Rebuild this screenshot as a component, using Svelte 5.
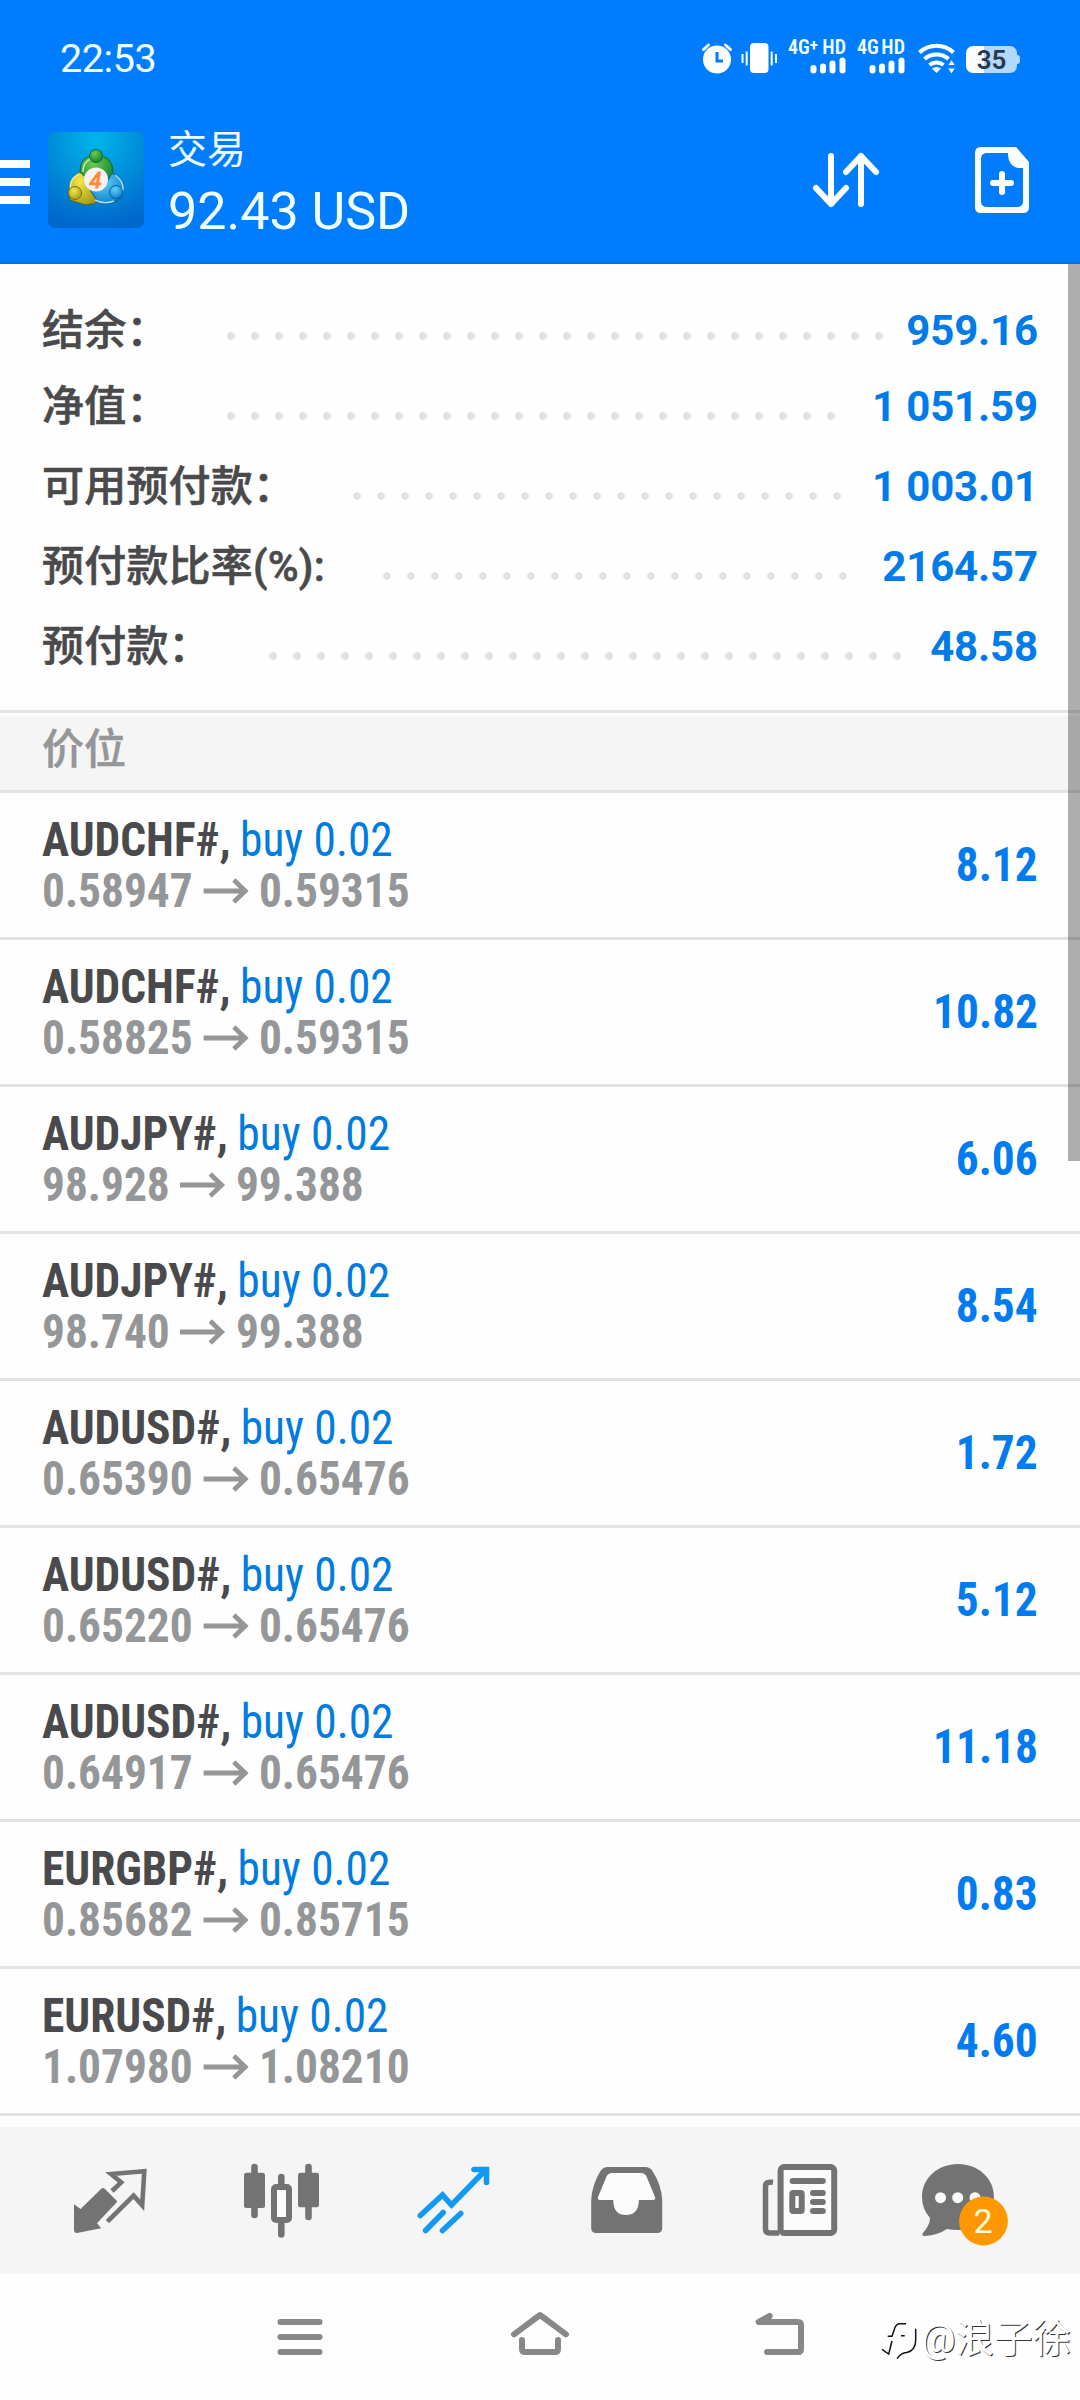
<script lang="ts">
	const summary = [
		{ label: '结余：', value: '959.16', dots: 28, tight: true },
		{ label: '净值：', value: '1 051.59', dots: 26, tight: false },
		{ label: '可用预付款：', value: '1 003.01', dots: 21, tight: false },
		{ label: '预付款比率(%):', value: '2164.57', dots: 20, tight: false },
		{ label: '预付款：', value: '48.58', dots: 27, tight: false }
	];

	const positions = [
		{ symbol: 'AUDCHF#', open: '0.58947', current: '0.59315', profit: '8.12' },
		{ symbol: 'AUDCHF#', open: '0.58825', current: '0.59315', profit: '10.82' },
		{ symbol: 'AUDJPY#', open: '98.928', current: '99.388', profit: '6.06' },
		{ symbol: 'AUDJPY#', open: '98.740', current: '99.388', profit: '8.54' },
		{ symbol: 'AUDUSD#', open: '0.65390', current: '0.65476', profit: '1.72' },
		{ symbol: 'AUDUSD#', open: '0.65220', current: '0.65476', profit: '5.12' },
		{ symbol: 'AUDUSD#', open: '0.64917', current: '0.65476', profit: '11.18' },
		{ symbol: 'EURGBP#', open: '0.85682', current: '0.85715', profit: '0.83' },
		{ symbol: 'EURUSD#', open: '1.07980', current: '1.08210', profit: '4.60' }
	];

	const carriers = [
		{ network: '4G', plus: true },
		{ network: '4G', plus: false }
	];
</script>

<div class="screen">
	<header class="header">
		<div class="status">
			<span class="time">22:53</span>
			<div class="status-icons">
				<svg class="alarm" width="32" height="32" viewBox="0 0 32 32">
					<circle cx="16" cy="17.5" r="14" fill="#fff" />
					<path d="M2.5 7.5 7.5 3M29.5 7.5l-5-4.5" stroke="#fff" stroke-width="3" stroke-linecap="round" />
					<path d="M16 10v9h6" fill="none" stroke="#007dff" stroke-width="3" />
				</svg>
				<svg class="vibrate" width="36" height="32" viewBox="0 0 36 32">
					<rect x="9" y="1" width="18.5" height="30" rx="4" fill="#fff" />
					<path d="M1.5 12v9M5.7 9.5v14M30.7 9.5v14M35 12v9" stroke="#fff" stroke-width="2" />
				</svg>
				{#each carriers as carrier}
					<div class="carrier" class:wide={carrier.plus}>
						<div class="network">
							<span>{carrier.network}{#if carrier.plus}<sup>+</sup>{/if}</span>
							<span>HD</span>
						</div>
						<svg width="36" height="17" viewBox="0 0 36 17">
							<path d="M3.5 11v2.5M13 9.5v4M22.5 6.5v7M32.5 3.5v10" stroke="#fff" stroke-width="6" stroke-linecap="round" />
						</svg>
					</div>
				{/each}
				<svg class="wifi" width="37" height="32" viewBox="0 0 37 32">
					<g fill="none" stroke="#fff" stroke-width="4">
						<path d="M1.5 10.5a25 25 0 0 1 34 0" />
						<path d="M6.5 17a18 18 0 0 1 24 0" />
						<path d="M11.5 23a11 11 0 0 1 14 0" />
					</g>
					<path d="m18.5 31-4.5-4.5q4.5-3 9 0z" fill="#fff" />
					<path d="m29.5 23.5 4-6 4 6zM29.5 26l4 6 4-6z" fill="#fff" stroke="#007dff" />
				</svg>
				<span class="battery">35</span>
			</div>
		</div>

		<div class="toolbar">
			<div class="burger"><i></i><i></i><i></i></div>
			<svg class="logo" width="96" height="96" viewBox="0 0 96 96">
				<defs>
					<radialGradient id="tile" cx=".5" cy=".08" r=".9">
						<stop offset="0" stop-color="#00b6ec" />
						<stop offset=".55" stop-color="#008bd8" />
						<stop offset="1" stop-color="#0068cc" />
					</radialGradient>
					<radialGradient id="green" cx=".4" cy=".3" r=".8">
						<stop offset="0" stop-color="#6cc94b" />
						<stop offset="1" stop-color="#087d32" />
					</radialGradient>
					<radialGradient id="yellow" cx=".4" cy=".3" r=".8">
						<stop offset="0" stop-color="#f5e74b" />
						<stop offset="1" stop-color="#a39710" />
					</radialGradient>
					<radialGradient id="blue" cx=".4" cy=".3" r=".8">
						<stop offset="0" stop-color="#5fd0ff" />
						<stop offset="1" stop-color="#0678c4" />
					</radialGradient>
				</defs>
				<rect width="96" height="96" rx="7" fill="url(#tile)" />
				<path d="M22 68Q17 48 33 39l14 4 1 28-10 2z" fill="url(#yellow)" stroke="#586b18" />
				<path d="M32 40q-1-16 16-17 17 1 17 17l-4 13H46z" fill="url(#green)" stroke="#0a6a36" />
				<path d="M64 41q16 8 10 23-9 11-24 6L42 58l16-6z" fill="url(#blue)" stroke="#08589b" />
				<path d="M35 40q0-13 13-14M23 60q-3-13 8-18M67 43q12 9 6 20M47 68q9 5 19 1" fill="none" stroke="#e9ffd9" stroke-opacity=".75" stroke-width="1.5" />
				<circle cx="48" cy="24" r="6.5" fill="url(#green)" stroke="#076b2e" />
				<circle cx="27" cy="61" r="6.5" fill="url(#yellow)" stroke="#756d13" />
				<circle cx="68" cy="60" r="6.5" fill="url(#blue)" stroke="#07609f" />
				<circle cx="48" cy="47.5" r="12" fill="#f4f2f4" />
				<text x="47.5" y="55.5" text-anchor="middle" font-size="22" font-style="italic" fill="#ff8a32" stroke="#ff8a32">4</text>
			</svg>
			<div class="heading">
				<span class="title">交易</span>
				<span class="total">92.43 USD</span>
			</div>
			<svg class="sort" width="68" height="56" viewBox="0 0 68 56" fill="none" stroke="#fff" stroke-width="6" stroke-linecap="round" stroke-linejoin="round">
				<path d="M19 4v48M4 36l15 16 15-16M49 52V4M34 20 49 4l15 16" />
			</svg>
			<svg class="new-order" width="54" height="66" viewBox="0 0 54 66">
				<path fill="#fff" fill-rule="evenodd" d="M6 0h35l13 15v45q0 6-6 6H6q-6 0-6-6V6q0-6 6-6zm6 6q-6 0-6 6v42q0 6 6 6h30q6 0 6-6V21h-5Q33 19 33 6z" />
				<path d="M27 27v18M18 36h18" stroke="#fff" stroke-width="6" stroke-linecap="round" />
			</svg>
		</div>
	</header>

	<main class="content">
		<section class="summary">
			{#each summary as item}
				<div class="summary-row" class:tight={item.tight}>
					<span class="label">{item.label}</span>
					<span class="dots" style="width: {item.dots * 24}px"></span>
					<span class="value">{item.value}</span>
				</div>
			{/each}
		</section>

		<h2 class="section-title">价位</h2>

		<section class="positions">
			{#each positions as position}
				<div class="position">
					<div class="info">
						<div class="line"><b>{position.symbol},</b> <span class="side">buy 0.02</span></div>
						<div class="line prices">
							<b>{position.open}</b>
							<svg width="46" height="26" viewBox="0 0 46 26" fill="none" stroke="#949698" stroke-width="5">
								<path d="M-1 13h44M31 2l12 11-12 11" />
							</svg>
							<b>{position.current}</b>
						</div>
					</div>
					<b class="profit">{position.profit}</b>
				</div>
			{/each}
		</section>
		<div class="scrollbar"></div>
	</main>

	<nav class="tabs">
		<svg viewBox="0 0 110 100">
			<path d="m19 53.3 6.6 4.7L46 38q2-2 4 0l11 11q2 1.5 0 3L42 72.3l4.2 5L22 82q-3 0-3-3z" fill="#737373" />
			<path d="m57 40 9.2-8.7L56 23l33.3-2.7-2.1 34-8.6-9.6-26.2 26" fill="none" stroke="#737373" stroke-width="4.6" />
		</svg>
		<svg viewBox="0 0 110 100" fill="#737373">
			<path d="M26.5 16v48M80.5 16v50M53.3 26v8M53.3 71v12.5" stroke="#737373" stroke-width="6.6" stroke-linecap="round" />
			<rect x="16" y="21.7" width="21" height="35.3" rx="2.5" />
			<rect x="70" y="21.7" width="21" height="34.5" rx="2.5" />
			<rect x="46" y="36" width="15" height="33" rx="2" fill="#fcfcfc" stroke="#737373" stroke-width="6" />
		</svg>
		<svg viewBox="0 0 110 100" fill="none" stroke="#109af5" stroke-width="5.6" stroke-linecap="round">
			<path d="M19.3 64.5 41.5 44l9 10L85 18.5M73 18.5h12.5v13M24.6 79.5l17.6-18M41.5 79.5l18.2-17" />
		</svg>
		<svg viewBox="0 0 110 100">
			<path fill="#737373" d="M34 16h37q5 0 7.5 4 9 14 9.7 29v28q0 5-5 5h-61q-5 0-5-5V49q.7-15 9.3-29 2.5-4 7.5-4z" />
			<path fill="#fcfcfc" d="M38 22h29q4 0 5.5 3.500L81 46q1 3-2 3H64.800v2q-1 13-12.800 13T39.300 51v-2H26q-3 0-2-3l8.500-20.500Q34 22 38 22z" />
		</svg>
		<svg viewBox="0 0 110 100" fill="none" stroke="#737373" stroke-width="6">
			<rect x="33.6" y="16" width="53.6" height="66" rx="3.5" fill="#fcfcfc" />
			<path d="M26 31.3q-7.5-1-7.5 4V78q0 4 4 4H32" stroke-width="5.5" />
			<path d="M45.6 30h30.2M66 42h9.8M66 51h9.8M66 60h9.8" stroke-linecap="round" />
			<rect x="45.3" y="42" width="9.4" height="18" rx="1" />
		</svg>
		<svg viewBox="0 0 110 100">
			<path fill="#737373" d="M38 13c20 0 36 14 36 33S58 79 38 79q-6 0-11-1-9 6-22 7-4 0-2-3 7-8 7-15Q2 58 2 46C2 27 18 13 38 13z" />
			<circle cx="20.5" cy="46.7" r="5.5" fill="#fcfcfc" />
			<circle cx="37.7" cy="46.7" r="5.5" fill="#fcfcfc" />
			<circle cx="55" cy="46.7" r="5.5" fill="#fcfcfc" />
			<circle cx="63.5" cy="70" r="24.4" fill="#ff9800" />
			<text x="63" y="82" text-anchor="middle" font-size="34" fill="#fffde0">2</text>
		</svg>
	</nav>

	<footer class="system-nav">
		<svg viewBox="0 0 60 60"><path d="M10.5 15h39M10.5 30h39M10.5 45h39" /></svg>
		<svg viewBox="0 0 60 60"><path d="M4 27.3 30 8l26 19.3M12 33v9q0 3 3 3h30q3 0 3-3v-9" /></svg>
		<svg viewBox="0 0 60 60"><path d="m19.7 9-11 6H48q3 0 3 3v24q0 3-3 3H17" /></svg>
	</footer>

	<div class="watermark">
		<svg width="40" height="38" viewBox="0 0 40 38" fill="none" stroke="#111" stroke-width="1.5">
			<path d="M6.7 14.3H11l2-6q1.5-6 5-6.6h7M34.7 6.700v11q0 11-9 12.800-6 .5-9.700 6.200M11 19 7.700 32 1 27.300M20 13.700h3.700" />
		</svg>
		<span>@浪子徐</span>
	</div>
</div>

<style>
	:global(body) {
		background: #fefefe;
	}

	.screen {
		position: relative;
		display: flex;
		flex-direction: column;
		width: 1080px;
		height: 2400px;
		overflow: hidden;
		background: #fefefe;
		font-family: Roboto, 'Noto Sans CJK SC', sans-serif;
	}

	svg {
		display: block;
		flex: none;
		overflow: visible;
	}

	.header {
		box-sizing: border-box;
		height: 264px;
		background: #007dff;
		border-bottom: 2px solid #0873e0;
		color: #f0ffff;
	}

	.status {
		display: flex;
		align-items: center;
		height: 116px;
		padding: 0 63px 0 60px;
	}

	.time {
		flex: 1;
		font-size: 39.5px;
		letter-spacing: -0.4px;
	}

	.status-icons {
		display: flex;
		align-items: center;
	}

	.vibrate {
		margin-left: 8px;
	}

	.carrier {
		display: flex;
		flex-direction: column;
		align-items: flex-end;
		gap: 2px;
		width: 48px;
		margin: 0 0 3px 11px;
	}

	.carrier.wide {
		width: 58px;
	}

	.network {
		display: flex;
		justify-content: space-between;
		width: 100%;
		font-size: 20px;
		font-weight: 600;
		font-stretch: 80%;
		line-height: 15px;
	}

	.network sup {
		font-size: 17px;
		line-height: 0;
		vertical-align: 3px;
	}

	.wifi {
		margin-left: 13px;
	}

	.battery {
		position: relative;
		width: 51px;
		height: 27px;
		margin: 2px 0 0 11px;
		border-radius: 7px;
		background: linear-gradient(90deg, #fff 18px, #b3d8ff 18px);
		color: #28384e;
		font-size: 26px;
		font-weight: 600;
		line-height: 28px;
		text-align: center;
	}

	.battery::after {
		content: '';
		position: absolute;
		top: 9px;
		right: -3px;
		width: 3px;
		height: 9px;
		border-radius: 0 3px 3px 0;
		background: #b3d8ff;
	}

	.toolbar {
		display: flex;
		align-items: flex-start;
		padding-top: 16px;
	}

	.burger {
		display: grid;
		gap: 10px;
		width: 30px;
		margin: 28px 18px 0 0;
	}

	.burger i {
		height: 8px;
		background: #fff;
	}

	.heading {
		display: flex;
		flex: 1;
		flex-direction: column;
		margin-left: 24px;
	}

	.title {
		font-size: 39px;
		line-height: 36px;
	}

	.total {
		font-size: 52px;
		line-height: 56px;
		margin-top: 16px;
	}

	.sort {
		margin: 20px 95px 0 0;
	}

	.new-order {
		margin: 15px 51px 0 0;
	}

	.content {
		position: relative;
		flex: none;
		height: 1863px;
	}

	.summary {
		box-sizing: border-box;
		height: 446px;
		padding: 30px 42px 0;
	}

	.summary-row {
		display: flex;
		align-items: center;
		height: 80px;
		color: #4a4a4c;
		font-size: 42px;
		line-height: 80px;
	}

	.summary-row.tight {
		height: 73px;
	}

	.label {
		font-weight: 500;
		letter-spacing: 0.2px;
		white-space: nowrap;
		-webkit-text-stroke: 0.6px #4a4a4c;
	}

	.dots {
		height: 8px;
		margin: 18px 0 0 50px;
		background: radial-gradient(circle, #e3e3e3 3.6px, transparent 4.1px) 0 0 / 24px 8px;
	}

	.tight .dots {
		margin-top: 10px;
	}

	.value {
		margin-left: auto;
		color: #007be8;
		font-weight: 700;
		letter-spacing: -0.15px;
	}

	.section-title {
		box-sizing: border-box;
		height: 83px;
		margin: 0;
		padding-left: 42px;
		border-top: 3px solid #e3e3e3;
		border-bottom: 3px solid #e3e3e3;
		background: #f5f5f5;
		box-shadow: inset 0 3px #fefefe;
		color: #949698;
		font-size: 42px;
		font-weight: 500;
		line-height: 74px;
		-webkit-text-stroke: 0.5px #949698;
	}

	.position {
		box-sizing: border-box;
		display: flex;
		align-items: center;
		justify-content: space-between;
		height: 147px;
		padding: 0 42px;
		border-bottom: 3px solid #e3e3e3;
		font-size: 48px;
		font-stretch: 75%;
	}

	/* narrower than the condensed cut goes */
	.info {
		transform: scaleX(0.945);
		transform-origin: left;
	}

	.line {
		color: #4a4a4c;
		line-height: 51px;
		white-space: nowrap;
	}

	.side {
		margin-left: -1px;
		color: #007be0;
	}

	.prices {
		display: flex;
		align-items: center;
		gap: 12px;
		color: #949698;
	}

	.profit {
		padding-bottom: 2px;
		color: #007bf0;
		transform: scaleX(0.945);
		transform-origin: right;
	}

	.scrollbar {
		position: absolute;
		top: 0;
		right: 0;
		width: 12px;
		height: 897px;
		background: rgba(0, 0, 0, 0.315);
	}

	.tabs {
		display: flex;
		gap: 63px;
		align-items: center;
		height: 147px;
		padding-left: 55px;
		background: #f5f5f5;
	}

	.tabs svg {
		width: 110px;
		height: 100px;
	}

	.system-nav {
		display: flex;
		align-items: center;
		justify-content: center;
		gap: 180px;
		height: 126px;
	}

	.system-nav svg {
		width: 60px;
		height: 60px;
		fill: none;
		stroke: #888;
		stroke-width: 6px;
		stroke-linecap: round;
		stroke-linejoin: round;
	}

	.watermark {
		position: absolute;
		right: 9px;
		bottom: 37px;
		display: flex;
		align-items: center;
		color: #fff;
		font-size: 38.5px;
		text-shadow: 1px 1px 0 #333;
	}

	.watermark svg {
		margin-top: 12px;
	}
</style>
